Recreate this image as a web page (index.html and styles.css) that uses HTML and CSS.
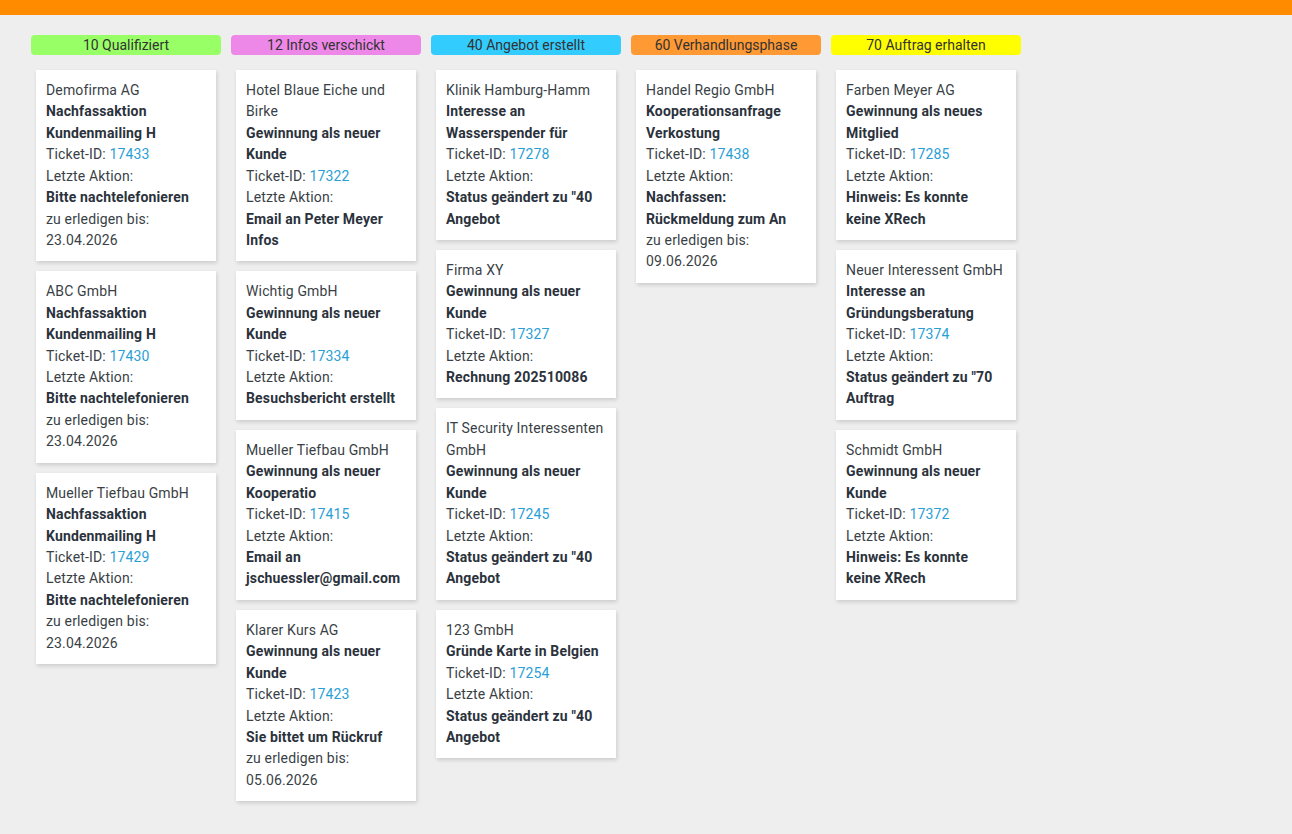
FILE: index.html
```html
<!DOCTYPE html>
<html lang="de">
<head>
  <meta charset="UTF-8">
  <title>Pipeline</title>
  <link rel="stylesheet" href="styles.css">
</head>
<body>
  <div class="topbar"></div>

  <div class="board">
    <div class="spalte">
      <div class="phase phase-10">10 Qualifiziert</div>
      <div class="karte">
        <div class="firma">Demofirma AG</div>
        <div class="titel">Nachfassaktion Kundenmailing H</div>
        <div>Ticket-ID: <a href="#">17433</a></div>
        <div>Letzte Aktion:</div>
        <div class="titel">Bitte nachtelefonieren</div>
        <div>zu erledigen bis:<br>23.04.2026</div>
      </div>
      <div class="karte">
        <div class="firma">ABC GmbH</div>
        <div class="titel">Nachfassaktion Kundenmailing H</div>
        <div>Ticket-ID: <a href="#">17430</a></div>
        <div>Letzte Aktion:</div>
        <div class="titel">Bitte nachtelefonieren</div>
        <div>zu erledigen bis:<br>23.04.2026</div>
      </div>
      <div class="karte">
        <div class="firma">Mueller Tiefbau GmbH</div>
        <div class="titel">Nachfassaktion Kundenmailing H</div>
        <div>Ticket-ID: <a href="#">17429</a></div>
        <div>Letzte Aktion:</div>
        <div class="titel">Bitte nachtelefonieren</div>
        <div>zu erledigen bis:<br>23.04.2026</div>
      </div>
    </div>

    <div class="spalte">
      <div class="phase phase-12">12 Infos verschickt</div>
      <div class="karte">
        <div class="firma">Hotel Blaue Eiche und Birke</div>
        <div class="titel">Gewinnung als neuer Kunde</div>
        <div>Ticket-ID: <a href="#">17322</a></div>
        <div>Letzte Aktion:</div>
        <div class="titel">Email an Peter Meyer Infos</div>
      </div>
      <div class="karte">
        <div class="firma">Wichtig GmbH</div>
        <div class="titel">Gewinnung als neuer Kunde</div>
        <div>Ticket-ID: <a href="#">17334</a></div>
        <div>Letzte Aktion:</div>
        <div class="titel">Besuchsbericht erstellt</div>
      </div>
      <div class="karte">
        <div class="firma">Mueller Tiefbau GmbH</div>
        <div class="titel">Gewinnung als neuer Kooperatio</div>
        <div>Ticket-ID: <a href="#">17415</a></div>
        <div>Letzte Aktion:</div>
        <div class="titel">Email an jschuessler@gmail.com</div>
      </div>
      <div class="karte">
        <div class="firma">Klarer Kurs AG</div>
        <div class="titel">Gewinnung als neuer Kunde</div>
        <div>Ticket-ID: <a href="#">17423</a></div>
        <div>Letzte Aktion:</div>
        <div class="titel">Sie bittet um Rückruf</div>
        <div>zu erledigen bis:<br>05.06.2026</div>
      </div>
    </div>

    <div class="spalte">
      <div class="phase phase-40">40 Angebot erstellt</div>
      <div class="karte">
        <div class="firma">Klinik Hamburg-Hamm</div>
        <div class="titel">Interesse an Wasserspender für</div>
        <div>Ticket-ID: <a href="#">17278</a></div>
        <div>Letzte Aktion:</div>
        <div class="titel">Status geändert zu "40 Angebot</div>
      </div>
      <div class="karte">
        <div class="firma">Firma XY</div>
        <div class="titel">Gewinnung als neuer Kunde</div>
        <div>Ticket-ID: <a href="#">17327</a></div>
        <div>Letzte Aktion:</div>
        <div class="titel">Rechnung 202510086</div>
      </div>
      <div class="karte">
        <div class="firma">IT Security Interessenten GmbH</div>
        <div class="titel">Gewinnung als neuer Kunde</div>
        <div>Ticket-ID: <a href="#">17245</a></div>
        <div>Letzte Aktion:</div>
        <div class="titel">Status geändert zu "40 Angebot</div>
      </div>
      <div class="karte">
        <div class="firma">123 GmbH</div>
        <div class="titel">Gründe Karte in Belgien</div>
        <div>Ticket-ID: <a href="#">17254</a></div>
        <div>Letzte Aktion:</div>
        <div class="titel">Status geändert zu "40 Angebot</div>
      </div>
    </div>

    <div class="spalte">
      <div class="phase phase-60">60 Verhandlungsphase</div>
      <div class="karte">
        <div class="firma">Handel Regio GmbH</div>
        <div class="titel">Kooperationsanfrage Verkostung</div>
        <div>Ticket-ID: <a href="#">17438</a></div>
        <div>Letzte Aktion:</div>
        <div class="titel">Nachfassen: Rückmeldung zum An</div>
        <div>zu erledigen bis:<br>09.06.2026</div>
      </div>
    </div>

    <div class="spalte">
      <div class="phase phase-70">70 Auftrag erhalten</div>
      <div class="karte">
        <div class="firma">Farben Meyer AG</div>
        <div class="titel">Gewinnung als neues Mitglied</div>
        <div>Ticket-ID: <a href="#">17285</a></div>
        <div>Letzte Aktion:</div>
        <div class="titel">Hinweis: Es konnte keine XRech</div>
      </div>
      <div class="karte">
        <div class="firma">Neuer Interessent GmbH</div>
        <div class="titel">Interesse an Gründungsberatung</div>
        <div>Ticket-ID: <a href="#">17374</a></div>
        <div>Letzte Aktion:</div>
        <div class="titel">Status geändert zu "70 Auftrag</div>
      </div>
      <div class="karte">
        <div class="firma">Schmidt GmbH</div>
        <div class="titel">Gewinnung als neuer Kunde</div>
        <div>Ticket-ID: <a href="#">17372</a></div>
        <div>Letzte Aktion:</div>
        <div class="titel">Hinweis: Es konnte keine XRech</div>
      </div>
    </div>
  </div>
</body>
</html>
```

FILE: styles.css
```css
body {
  font-family: Roboto, "Liberation Sans", sans-serif;
  font-size: 14px;
  line-height: 1.5306;
  color: #3a3f46;
  background-color: #eeeeee;
  margin: 0;
}

.topbar {
  height: 15px;
  background-color: #ff8c00;
}

.board {
  display: flex;
  align-items: flex-start;
  gap: 10px;
  padding: 20px 0 20px 31px;
}

.spalte {
  width: 190px;
  flex-shrink: 0;
}

.phase {
  height: 20px;
  line-height: 20px;
  text-align: center;
  color: #333;
  border-radius: 4px;
  margin-bottom: 15px;
}

.phase-10 { background-color: #99ff66; }
.phase-12 { background-color: #ee88e8; }
.phase-40 { background-color: #33ccff; }
.phase-60 { background-color: #ff9933; }
.phase-70 { background-color: #ffff00; }

.karte {
  background-color: #fff;
  margin: 0 5px 10px;
  padding: 10px;
  letter-spacing: 0.15px;
  box-shadow: 1px 2px 4px rgba(0, 0, 0, 0.15);
}

.titel {
  font-weight: bold;
  color: #2b323c;
}

.karte a {
  color: #2a9fd6;
  text-decoration: none;
}
```
